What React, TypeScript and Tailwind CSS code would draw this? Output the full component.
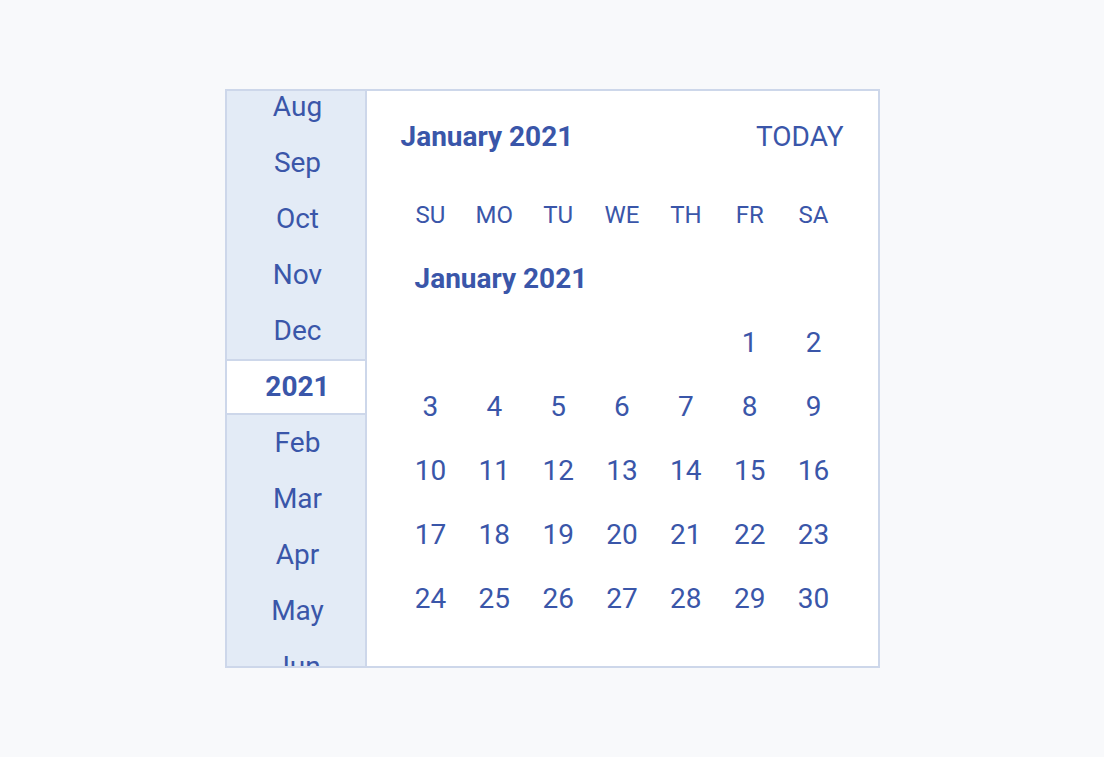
const months = ['Aug', 'Sep', 'Oct', 'Nov', 'Dec', '2021', 'Feb', 'Mar', 'Apr', 'May', 'Jun'];
const weekdays = ['SU', 'MO', 'TU', 'WE', 'TH', 'FR', 'SA'];

// January 2021 starts on a Friday
const days: (number | null)[] = [
  ...Array(5).fill(null),
  ...Array.from({ length: 30 }, (_, i) => i + 1),
];

export default function App() {
  return (
    <div
      className="min-h-screen bg-[#f8f9fb] flex items-center justify-center text-[#3a56a9]"
      style={{ fontFamily: 'Roboto, "Liberation Sans", sans-serif' }}
    >
      <div className="flex w-[655px] h-[579px] border-2 border-[#cdd7ea] bg-white">
        {/* Month / year scroller */}
        <div className="w-[140px] shrink-0 border-r-2 border-[#cdd7ea] bg-[#e3ebf6] overflow-hidden">
          <div className="-mt-[12px]">
            {months.map((m) =>
              m === '2021' ? (
                <div
                  key={m}
                  className="h-[56px] flex items-center justify-center pl-[4px] bg-white border-y-2 border-[#cdd7ea] text-[28px] font-bold"
                >
                  {m}
                </div>
              ) : (
                <div key={m} className="h-[56px] flex items-center justify-center pl-[4px] text-[28px]">
                  {m}
                </div>
              )
            )}
          </div>
        </div>

        {/* Calendar */}
        <div className="flex-1 flex flex-col">
          <div className="h-[92px] flex items-center justify-between pl-[34px] pr-[34px]">
            <span className="text-[28px] font-bold">January 2021</span>
            <button className="text-[28px] leading-none">TODAY</button>
          </div>
          <div className="px-[32px]">
            <div className="grid grid-cols-7">
              {weekdays.map((d) => (
                <div key={d} className="h-[64px] flex items-center justify-center text-[24px]">
                  {d}
                </div>
              ))}
            </div>
            <div className="h-[64px] flex items-center pl-[16px] text-[28px] font-bold">
              January 2021
            </div>
            <div className="grid grid-cols-7">
              {days.map((d, i) => (
                <div key={i} className="h-[64px] flex items-center justify-center text-[28px]">
                  {d ?? ''}
                </div>
              ))}
            </div>
          </div>
        </div>
      </div>
    </div>
  );
}
